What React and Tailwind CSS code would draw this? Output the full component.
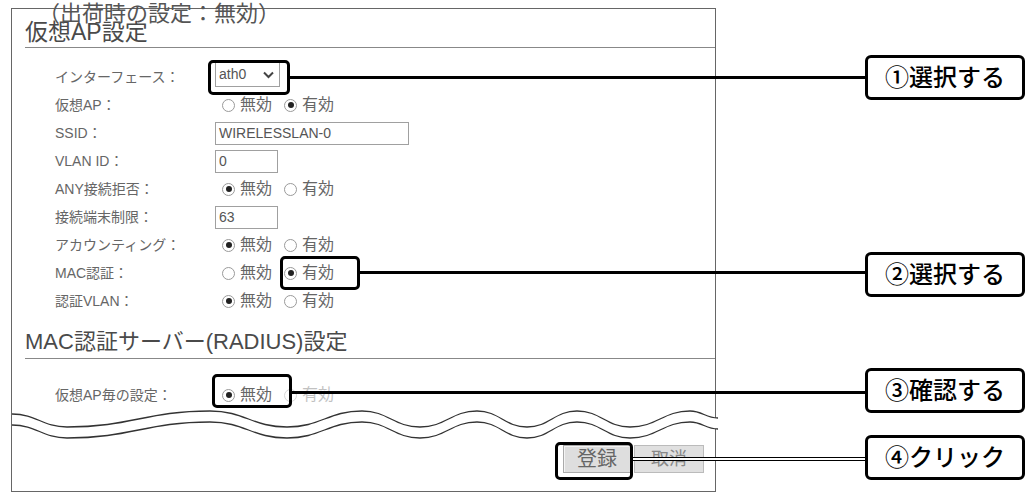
import React from "react";

const JP = { fontFamily: '"Liberation Sans", "Noto Sans CJK JP", sans-serif' };

const Radio = ({ checked }) => (
  <span className="flex h-[13px] w-[13px] shrink-0 items-center justify-center rounded-full border border-[#9a9a9a] bg-white">
    {checked && <span className="h-[6px] w-[6px] rounded-full bg-[#222]" />}
  </span>
);

const RadioPair = ({ on, faded }) => (
  <div className="ml-[7px] flex items-center text-[16px] text-[#666]">
    <Radio checked={!on} />
    <span className="ml-[5px]">無効</span>
    <span className={faded ? "ml-[12px] flex items-center opacity-40" : "ml-[12px] flex items-center"}>
      <Radio checked={on} />
      <span className="ml-[5px]">有効</span>
    </span>
  </div>
);

const Row = ({ label, children }) => (
  <div className="flex h-[28px] items-center pl-[43px]">
    <div className="w-[160px] text-[14px] text-[#666]">{label}</div>
    <div className="flex items-center">{children}</div>
  </div>
);

const TextBox = ({ value, w }) => (
  <div className={`flex h-[23px] items-center border border-[#a0a0a0] bg-white px-[3px] text-[14px] text-[#555] ${w}`}>
    {value}
  </div>
);

// hand-drawn break line, crest/trough points in svg coords
const pts = [
  [0, 5], [55, 18], [198, 2], [275, 18], [350, 2], [408, 18], [465, 2],
  [515, 18], [565, 2], [618, 18], [678, 2], [706, 9],
];

const wavePath = (p, dy) => {
  let d = `M${p[0][0]},${p[0][1] + dy}`;
  for (let i = 1; i < p.length; i++) {
    const [x0, y0] = p[i - 1];
    const [x1, y1] = p[i];
    const k = (x1 - x0) * 0.45;
    d += ` C${x0 + k},${y0 + dy} ${x1 - k},${y1 + dy} ${x1},${y1 + dy}`;
  }
  return d;
};

const wavePathBack = (p, dy) => {
  const r = [...p].reverse();
  let d = ` L${r[0][0]},${r[0][1] + dy}`;
  for (let i = 1; i < r.length; i++) {
    const [x0, y0] = r[i - 1];
    const [x1, y1] = r[i];
    const k = (x0 - x1) * 0.45;
    d += ` C${x0 - k},${y0 + dy} ${x1 + k},${y1 + dy} ${x1},${y1 + dy}`;
  }
  return d + " Z";
};

const Callout = ({ top, children }) => (
  <div
    className={`absolute left-[865px] flex h-[45px] w-[160px] items-center justify-center rounded-[6px] border-[3px] border-black bg-white text-[24px] font-medium text-black ${top}`}
  >
    {children}
  </div>
);

export default function App() {
  return (
    <div className="relative h-[492px] w-[1032px] overflow-hidden bg-white" style={JP}>
      <div className="ml-[11px] mt-[8px] h-[484px] w-[705px] border border-[#666]">
        <div className="ml-[13px] flex h-[39px] items-end border-b border-[#888] pb-[3px] text-[23px] leading-none text-[#4a4a4a]">
          仮想AP設定
        </div>

        <div className="pt-[15px]">
          <Row label="インターフェース：">
            <div className="-mt-[5px] flex h-[25px] w-[65px] items-center justify-between border border-[#a0a0a0] bg-white pl-[3px] pr-[5px] text-[14px] text-[#555]">
              <span>ath0</span>
              <svg width="11" height="8" viewBox="0 0 11 8">
                <path d="M1 1.5 L5.5 6 L10 1.5" fill="none" stroke="#444" strokeWidth="2" />
              </svg>
            </div>
          </Row>
          <Row label="仮想AP：">
            <RadioPair on />
          </Row>
          <Row label="SSID：">
            <TextBox value="WIRELESSLAN-0" w="w-[194px]" />
          </Row>
          <Row label="VLAN ID：">
            <TextBox value="0" w="w-[63px]" />
          </Row>
          <Row label="ANY接続拒否：">
            <RadioPair />
          </Row>
          <Row label="接続端末制限：">
            <TextBox value="63" w="w-[63px]" />
          </Row>
          <Row label="アカウンティング：">
            <RadioPair />
          </Row>
          <Row label="MAC認証：">
            <RadioPair on />
          </Row>
          <Row label="認証VLAN：">
            <RadioPair />
          </Row>
        </div>

        <div className="ml-[13px] flex h-[44px] items-end border-b border-[#888] pb-[5px] text-[22px] leading-none text-[#4a4a4a]">
          MAC認証サーバー(RADIUS)設定
        </div>

        <div className="pt-[22px]">
          <Row label="仮想AP毎の設定：">
            <RadioPair faded />
          </Row>
        </div>

        <div className="relative h-[30px]">
          <svg className="absolute left-0 top-0 overflow-visible" width="706" height="32" viewBox="0 0 706 32">
            <path d={wavePath(pts, 0) + wavePathBack(pts, 11)} fill="#fff" />
            <path d={wavePath(pts, 0)} fill="none" stroke="#333" strokeWidth="1.3" />
            <path d={wavePath(pts, 11)} fill="none" stroke="#333" strokeWidth="1.3" />
          </svg>
        </div>

        <div className="flex justify-end gap-[3px] pr-[11px] pt-[6px]">
          <div className="flex h-[28px] w-[68px] items-center justify-center border border-[#aaa] bg-[#dedede] text-[20px] text-[#666] shadow-[inset_1px_1px_0_#f4f4f4]">
            登録
          </div>
          <div className="flex h-[28px] w-[70px] items-center justify-center border border-[#bbb] bg-[#e0e0e0] text-[18px] text-[#888]">
            取消
          </div>
        </div>
      </div>

      <div className="absolute left-[38px] top-[2px] bg-transparent text-[22px] leading-[24px] text-[#555]">
        （出荷時の設定：無効）
      </div>

      {/* highlight frames */}
      <div className="absolute left-[208px] top-[60px] h-[35px] w-[82px] rounded-[5px] border-[3px] border-black" />
      <div className="absolute left-[280px] top-[256px] h-[34px] w-[80px] rounded-[5px] border-[3px] border-black" />
      <div className="absolute left-[212px] top-[374px] h-[34px] w-[80px] rounded-[5px] border-[3px] border-black" />
      <div className="absolute left-[555px] top-[442px] h-[38px] w-[78px] rounded-[5px] border-[3px] border-black" />

      {/* leader lines */}
      <div className="absolute left-[290px] top-[76px] h-[3px] w-[575px] bg-black" />
      <div className="absolute left-[360px] top-[271px] h-[3px] w-[505px] bg-black" />
      <div className="absolute left-[292px] top-[391px] h-[3px] w-[573px] bg-black" />
      <div className="absolute left-[633px] top-[457px] h-[4px] w-[232px] border-y border-black bg-white" />

      <Callout top="top-[55px]">①選択する</Callout>
      <Callout top="top-[252px]">②選択する</Callout>
      <Callout top="top-[368px]">③確認する</Callout>
      <Callout top="top-[435px]">④クリック</Callout>
    </div>
  );
}
